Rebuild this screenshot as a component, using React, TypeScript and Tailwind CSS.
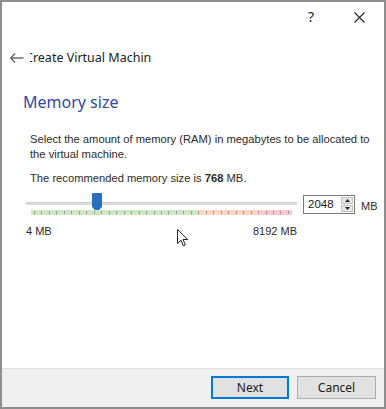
import React from "react";

const ticks = Array.from({ length: 35 });

function App() {
  return (
    <div className="w-[386px] h-[409px] bg-white border-2 border-[#8e8e8e] flex flex-col font-['Noto_Sans',sans-serif] text-[#1a1a1a] relative overflow-hidden">
      {/* title bar */}
      <div className="h-[30px] flex items-center justify-end pr-[19px] shrink-0">
        <span className="text-[14px] leading-none mr-[40px] text-[#222]">?</span>
        <svg width="11" height="11" viewBox="0 0 11 11" className="text-[#222]">
          <path d="M0.5 0.5 L10.5 10.5 M10.5 0.5 L0.5 10.5" stroke="currentColor" strokeWidth="1.1" />
        </svg>
      </div>

      {/* header */}
      <div className="h-[20px] mt-[16px] flex items-center pl-[8px] shrink-0">
        <svg width="14" height="10" viewBox="0 0 14 10" className="text-[#6b6b6b]">
          <path d="M5 0.5 L0.8 5 L5 9.5 M0.8 5 H13.5" stroke="currentColor" strokeWidth="1.4" fill="none" />
        </svg>
        <div className="ml-[6px] w-[121px] overflow-hidden whitespace-nowrap">
          <span className="block -ml-[5px] text-[12.5px] text-[#222]">Create Virtual Machine</span>
        </div>
      </div>

      {/* content */}
      <div className="pl-[21px] pr-[2px] mt-[23px]">
        <h1 className="text-[16px] leading-[22px] text-[#3446a8]">Memory size</h1>
        <div className="pl-[7px] mt-[19px] font-['Liberation_Sans',sans-serif] text-[11.2px] leading-[15px] text-[#2b2b2b]">
          <p>Select the amount of memory (RAM) in megabytes to be allocated to the virtual machine.</p>
          <p className="mt-[9px]">
            The recommended memory size is <b>768</b> MB.
          </p>
        </div>

        <div className="flex items-start mt-[7px] pl-[3px]">
          <div className="w-[271px] shrink-0 relative pt-[9px]">
            <div className="h-[3px] bg-[#dcdcdc] border-t border-[#cfcfcf]" />
            <div className="absolute left-[66px] top-0 w-[10px] h-[20px]">
              <svg width="10" height="20" viewBox="0 0 10 20">
                <path d="M1 0 H9 Q10 0 10 1 V14 L5 19 L0 14 V1 Q0 0 1 0 Z" fill="#2a6fbd" />
              </svg>
            </div>
            <div className="ml-[5px] w-[261px] h-[5px] mt-[5px] flex relative">
              <div className="w-[169px] bg-[#cfe8c3]" />
              <div className="w-[60px] bg-[#fdd6c4]" />
              <div className="flex-1 bg-[#fcc7cd]" />
              <div className="absolute inset-0 flex justify-between items-center px-[3px]">
                {ticks.map((_, i) => (
                  <div key={i} className="w-px h-[3px] bg-[#9a9a9a]" />
                ))}
              </div>
            </div>
            <div className="flex justify-between mt-[8px] font-['Liberation_Sans',sans-serif] text-[11px] text-[#2b2b2b]">
              <span>4 MB</span>
              <span>8192 MB</span>
            </div>
          </div>

          <div className="ml-[6px] mt-[2px] w-[52px] h-[19px] shrink-0 border border-[#7a7a7a] flex items-center">
            <span className="pl-[4px] flex-1 font-['Liberation_Sans',sans-serif] text-[11.5px]">2048</span>
            <div className="w-[12px] h-[15px] mr-[1px] flex flex-col gap-px">
              <div className="flex-1 bg-[#e5e5e5] border border-[#c4c4c4] flex items-center justify-center">
                <svg width="5" height="3" viewBox="0 0 5 3"><path d="M0 3 L2.5 0 L5 3 Z" fill="#222" /></svg>
              </div>
              <div className="flex-1 bg-[#e5e5e5] border border-[#c4c4c4] flex items-center justify-center">
                <svg width="5" height="3" viewBox="0 0 5 3"><path d="M0 0 L2.5 3 L5 0 Z" fill="#222" /></svg>
              </div>
            </div>
          </div>
          <span className="ml-[6px] mt-[5px] shrink-0 font-['Liberation_Sans',sans-serif] text-[11px] text-[#2b2b2b]">MB</span>
        </div>
      </div>

      <div className="flex-1" />

      {/* footer */}
      <div className="h-[39px] shrink-0 bg-[#f0f0f0] border-t border-[#dfdfdf] flex items-center justify-end gap-[8px] pr-[8px] pb-[1px]">
        <button className="w-[78px] h-[23px] bg-[#e1e1e1] border-2 border-[#0078d7] text-[12px] text-[#1a1a1a]">Next</button>
        <button className="w-[79px] h-[23px] bg-[#e1e1e1] border border-[#adadad] text-[12px] text-[#1a1a1a]">Cancel</button>
      </div>

      {/* mouse pointer */}
      <svg className="absolute left-[175px] top-[227px]" width="12" height="18" viewBox="0 0 12 18">
        <path d="M0.5 0.5 V14.5 L4 11.2 L6.3 16.8 L8.3 16 L6 10.5 H10.8 Z" fill="white" stroke="#222" strokeWidth="1" />
      </svg>
    </div>
  );
}

export default App;
